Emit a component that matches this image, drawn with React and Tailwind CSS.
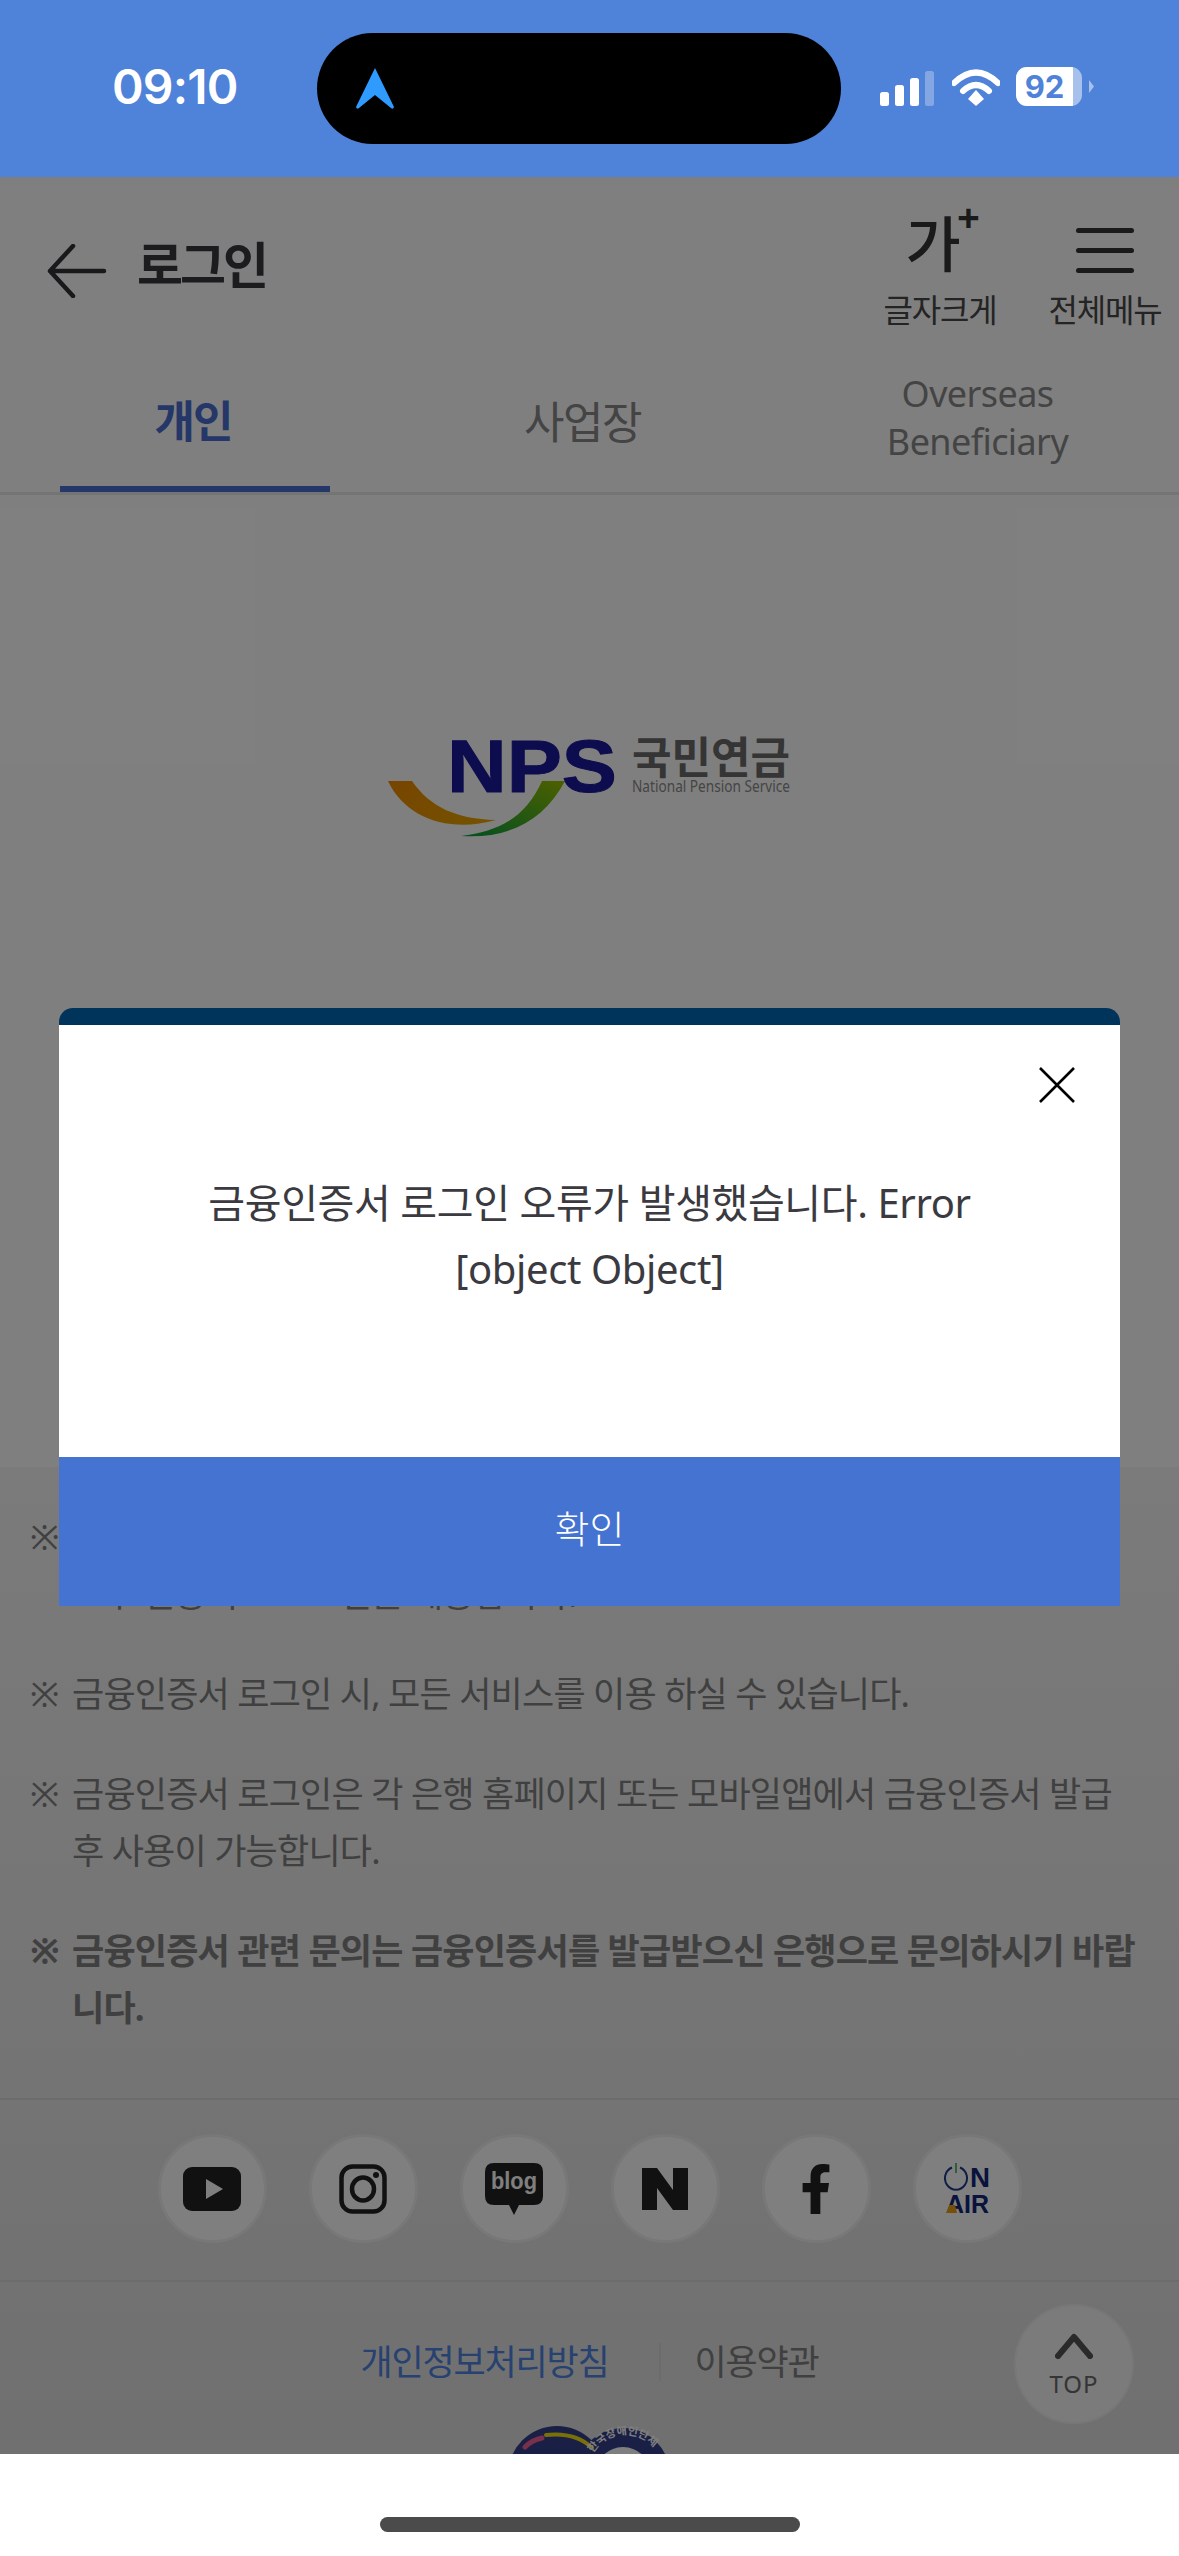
import { FaFacebookF } from 'react-icons/fa'

const KR = "font-['Noto_Sans','Noto_Sans_CJK_KR',sans-serif]"

function StatusBar() {
  return (
    <div className="relative z-20 flex h-[177px] shrink-0 items-start bg-[#4f82d9]">
      <div className="ml-[112px] mt-[57px] w-[205px] font-['Inter',sans-serif] text-[48px] font-semibold leading-[60px] tracking-[-0.8px] text-white">09:10</div>
      <div className="mt-[33px] flex h-[111px] w-[524px] items-center rounded-full bg-black pl-[38px]">
        <svg width="40" height="42" viewBox="0 0 40 42">
          <path d="M20 0 L39 39 Q38 42 36 40 L20 27 L4 40 Q2 42 1 39 Z" fill="#2f9bff" />
        </svg>
      </div>
      <div className="ml-[39px] mt-[65px] flex items-end">
        <svg width="55" height="41" viewBox="0 0 55 41">
          <rect x="0" y="27" width="9" height="14" rx="2.5" fill="#fff" />
          <rect x="15" y="20" width="9" height="21" rx="2.5" fill="#fff" />
          <rect x="30" y="13" width="9" height="28" rx="2.5" fill="#fff" />
          <rect x="45" y="6" width="9" height="35" rx="2.5" fill="#fff" fillOpacity="0.3" />
        </svg>
        <svg className="ml-[17px]" width="48" height="38" viewBox="0 0 48 38">
          <path d="M2 15 Q24 -6 46 15" stroke="#fff" strokeWidth="6" fill="none" strokeLinecap="round" />
          <path d="M11 23 Q24 11 37 23" stroke="#fff" strokeWidth="6" fill="none" strokeLinecap="round" />
          <path d="M16 31 L24 22 L32 31 L24 38 Z" fill="#fff" />
        </svg>
        <div className="relative ml-[16px] flex h-[39px] w-[66px] items-center overflow-hidden rounded-[11px] bg-white/50">
          <div className="flex h-full w-[57px] items-center justify-center bg-white font-['Inter',sans-serif] text-[31px] font-bold leading-none text-[#4f82d9]">92</div>
        </div>
        <svg className="mb-[13px] ml-[7px]" width="5" height="13" viewBox="0 0 5 13">
          <path d="M0 0 L5 6.5 L0 13 Z" fill="#fff" fillOpacity="0.5" />
        </svg>
      </div>
    </div>
  )
}

function Header() {
  return (
    <div className="flex h-[138px] items-start">
      <svg className="ml-[47px] mt-[67px]" width="60" height="54" viewBox="0 0 60 54">
        <path d="M26 2 L3 27 L26 52 M3 27 H57" stroke="#333338" strokeWidth="4.5" fill="none" strokeLinecap="round" strokeLinejoin="round" />
      </svg>
      <div className="ml-[30px] mt-[55px] text-[50px] font-bold leading-[66px] tracking-[-3px] text-[#38383e]">로그인</div>
      <div className="ml-auto mr-[15px] flex gap-[47px]">
        <div className="flex w-[118px] flex-col items-center">
          <div className="relative mr-[14px] mt-[34px] h-[66px] w-[70px] text-center text-[60px] font-medium leading-[66px] text-[#343434]">
            가
            <span className="absolute right-[-12px] top-[-16px] text-[40px] font-bold leading-[44px]">+</span>
          </div>
          <div className="mt-[12px] whitespace-nowrap text-[32px] leading-[42px] tracking-[-1.2px] text-[#484848]">글자크게</div>
        </div>
        <div className="flex w-[118px] flex-col items-center">
          <div className="mt-[51px] flex h-[49px] w-[58px] flex-col gap-[15px]">
            <div className="h-[5px] rounded-full bg-[#343434]" />
            <div className="h-[5px] rounded-full bg-[#343434]" />
            <div className="h-[5px] rounded-full bg-[#343434]" />
          </div>
          <div className="mt-[12px] whitespace-nowrap text-[32px] leading-[42px] tracking-[-1.2px] text-[#484848]">전체메뉴</div>
        </div>
      </div>
    </div>
  )
}

function Tabs() {
  return (
    <div className="grid h-[180px] grid-cols-3 border-b-[3px] border-[#e8e8ea]">
      <div className="ml-[60px] mr-[63px] flex items-center justify-center border-b-[6px] border-[#4a6fd0] pr-[4px] pt-[40px] text-[44px] font-bold leading-[56px] tracking-[-2px] text-[#4a6fd0]">개인</div>
      <div className="flex items-center justify-center pr-[14px] pt-[36px] text-[44px] leading-[56px] tracking-[-1.5px] text-[#888888]">사업장</div>
      <div className="flex items-center justify-center pr-[10px] pt-[29px] text-center text-[36px] leading-[48px] tracking-[-0.6px] text-[#888888]">
        <div>Overseas<br />Beneficiary</div>
      </div>
    </div>
  )
}

function Logo() {
  return (
    <div className="flex h-[972px] justify-center pt-[220px]">
      <svg width="404" height="124" viewBox="0 -20 404 124">
        <defs>
          <linearGradient id="sw1" x1="0" y1="0" x2="1" y2="0.3">
            <stop offset="0" stopColor="#f08a00" />
            <stop offset="1" stopColor="#e8a400" />
          </linearGradient>
          <linearGradient id="sw2" x1="0" y1="1" x2="1" y2="0">
            <stop offset="0" stopColor="#00a040" />
            <stop offset="1" stopColor="#9cc000" />
          </linearGradient>
        </defs>
        <path d="M0 46 H24 C42 72 68 84 108 85 C62 98 18 84 0 46 Z" fill="url(#sw1)" />
        <path d="M154 46 H177 C156 86 120 104 73 101 C112 96 138 82 154 46 Z" fill="url(#sw2)" />
        <text x="59" y="57" textLength="170" lengthAdjust="spacingAndGlyphs" fontFamily="Liberation Sans" fontWeight="700" fontSize="75" fill="#18189c" stroke="#18189c" strokeWidth="1">NPS</text>
        <text x="244" y="39" textLength="158" lengthAdjust="spacingAndGlyphs" fontFamily="Noto Sans CJK KR" fontWeight="700" fontSize="44" fill="#6a6a6a">국민연금</text>
        <text x="244" y="57" textLength="158" lengthAdjust="spacingAndGlyphs" fontFamily="Noto Sans" fontSize="16" fill="#8a8a8a">National Pension Service</text>
      </svg>
    </div>
  )
}

function Note({ children, bold }) {
  return (
    <div className={`flex text-[35px] leading-[57px] tracking-[-0.8px] text-[#808080] ${bold ? 'font-bold' : ''}`}>
      <span className="w-[42px] shrink-0">※</span>
      <div>{children}</div>
    </div>
  )
}

const socials = [
  <svg key="yt" width="58" height="44" viewBox="0 0 58 44"><rect width="58" height="44" rx="9" fill="#222" /><path d="M23 12 L40 22 L23 32 Z" fill="#fff" /></svg>,
  <svg key="ig" width="48" height="50" viewBox="0 0 48 50"><rect x="2.5" y="2.5" width="43" height="45" rx="11" fill="none" stroke="#222" strokeWidth="4.5" /><ellipse cx="24" cy="25" rx="11" ry="11.5" fill="none" stroke="#222" strokeWidth="4.5" /><circle cx="37" cy="11" r="3" fill="#222" /></svg>,
  <svg key="blog" width="58" height="52" viewBox="0 0 58 52"><path d="M9 0 H49 Q58 0 58 9 V33 Q58 42 49 42 H34 L29 52 L24 42 H9 Q0 42 0 33 V9 Q0 0 9 0 Z" fill="#222" /><text x="6" y="26" textLength="46" lengthAdjust="spacingAndGlyphs" fontFamily="Liberation Sans" fontWeight="700" fontSize="24" fill="#fff">blog</text></svg>,
  <svg key="n" width="46" height="42" viewBox="0 0 46 42"><path d="M0 0 H15 L31 22 V0 H46 V42 H31 L15 20 V42 H0 Z" fill="#222" /></svg>,
  <FaFacebookF key="fb" className="text-[50px] text-[#222]" />,
  <svg key="air" width="46" height="58" viewBox="0 -4 46 58">
    <path d="M8 3.5 A11 11.5 0 1 0 16 3.5" fill="none" stroke="#1e3c8c" strokeWidth="2" />
    <path d="M12 -1 V9" stroke="#36a24a" strokeWidth="1.5" />
    <text x="26" y="23" textLength="20" lengthAdjust="spacingAndGlyphs" fontFamily="Liberation Sans" fontWeight="700" fontSize="27" fill="#12267a">N</text>
    <text x="2" y="49" textLength="43" lengthAdjust="spacingAndGlyphs" fontFamily="Liberation Sans" fontWeight="700" fontSize="26" fill="#12267a">AIR</text>
    <path d="M2 49 L5.5 41 H11 L13 49 Z" fill="#e8a010" />
  </svg>,
]

function Badge() {
  return (
    <svg className="absolute left-[508px] top-[144px]" width="160" height="60" viewBox="0 0 160 60">
      <defs>
        <path id="badgeArc" d="M85 27 A38 38 0 0 1 150 27" />
      </defs>
      <circle cx="49" cy="49" r="49" fill="#34408a" />
      <circle cx="115" cy="49" r="47" fill="#34408a" />
      <circle cx="115" cy="49" r="28" fill="#ffffff" />
      <path d="M17 21 Q24 14 34 12" stroke="#f0609a" strokeWidth="5" fill="none" strokeLinecap="round" />
      <path d="M38 9 Q68 6 84 22" stroke="#f4e010" strokeWidth="4" fill="none" strokeLinecap="round" />
      <text fontFamily="Noto Sans CJK KR" fontWeight="700" fontSize="11" fill="#ffffff">
        <textPath href="#badgeArc">한국장애인단체</textPath>
      </text>
    </svg>
  )
}

function Footer() {
  return (
    <div className="bg-[linear-gradient(to_bottom,#f6f6f6,#e8e8e8_65%,#e0e0e0)]">
      <div className="pl-[30px] pr-[39px] pt-[41px]">
        <div className="flex flex-col gap-[43px]">
          <Note>금융인증서는 금융결제원의 인증 서비스로 금융기관을 통해 발급받으신<br />모두 인증서로 로그인을 제공합니다.</Note>
          <Note>금융인증서 로그인 시, 모든 서비스를 이용 하실 수 있습니다.</Note>
          <Note>금융인증서 로그인은 각 은행 홈페이지 또는 모바일앱에서 금융인증서 발급 후 사용이 가능합니다.</Note>
          <Note bold>금융인증서 관련 문의는 금융인증서를 발급받으신 은행으로 문의하시기 바랍니다.</Note>
        </div>
      </div>
      <div className="mt-[62px] flex h-[184px] items-center justify-center gap-[42px] border-y-[2px] border-[#d8d8d8] pb-[3px]">
        {socials.map((icon, i) => (
          <div key={i} className="flex h-[109px] w-[109px] items-center justify-center rounded-full border-[3px] border-[#f0f0f2] bg-white">
            {icon}
          </div>
        ))}
      </div>
      <div className="relative flex h-[172px] flex-col items-center">
        <div className="mt-[58px] flex items-center text-[35px] leading-[44px] tracking-[-1.2px]">
          <span className="text-[#4f83e0]">개인정보처리방침</span>
          <span className="ml-[50px] mr-[34px] h-[38px] w-[2px] bg-[#d8d8d8]" />
          <span className="text-[#808080]">이용약관</span>
        </div>
        <Badge />
        <div className="absolute right-[45px] top-[22px] flex h-[120px] w-[120px] flex-col items-center rounded-full border-[2px] border-[#eeeeee] bg-[#f6f6f6]">
          <svg className="mt-[27px]" width="38" height="26" viewBox="0 0 38 26">
            <path d="M3 23 L19 4 L35 23" stroke="#555" strokeWidth="6" fill="none" strokeLinecap="round" strokeLinejoin="round" />
          </svg>
          <div className="mt-[10px] text-[24px] leading-[30px] tracking-[1px] text-[#6a6a6a]">TOP</div>
        </div>
      </div>
    </div>
  )
}

function Modal() {
  return (
    <div className="absolute left-[59px] top-[831px] w-[1061px]">
      <div className="h-[17px] rounded-t-[14px] bg-[#00345a]" />
      <div className="relative h-[432px] bg-white pt-[145px] text-center text-[40px] leading-[66px] tracking-[-0.4px] text-[#3a3a40]">
        <svg className="absolute right-[45px] top-[42px]" width="36" height="36" viewBox="0 0 36 36">
          <path d="M1 1 L35 35 M35 1 L1 35" stroke="#000" strokeWidth="2.6" />
        </svg>
        금융인증서 로그인 오류가 발생했습니다. Error<br />[object Object]
      </div>
      <div className="flex h-[149px] items-center justify-center bg-[#4573d1] pb-[6px] text-[38px] font-light text-white">확인</div>
    </div>
  )
}

export default function App() {
  return (
    <div className={`relative flex h-[2556px] w-[1179px] flex-col overflow-hidden bg-white ${KR}`}>
      <StatusBar />
      <div className="min-h-0 flex-1 overflow-hidden">
        <Header />
        <Tabs />
        <Logo />
        <Footer />
      </div>
      <div className="absolute inset-x-0 bottom-[102px] top-[177px] bg-black/50">
        <Modal />
      </div>
      <div className="relative z-20 flex h-[102px] shrink-0 items-start justify-center bg-white pt-[63px]">
        <div className="h-[15px] w-[420px] rounded-full bg-[#4b4b4b]" />
      </div>
    </div>
  )
}
